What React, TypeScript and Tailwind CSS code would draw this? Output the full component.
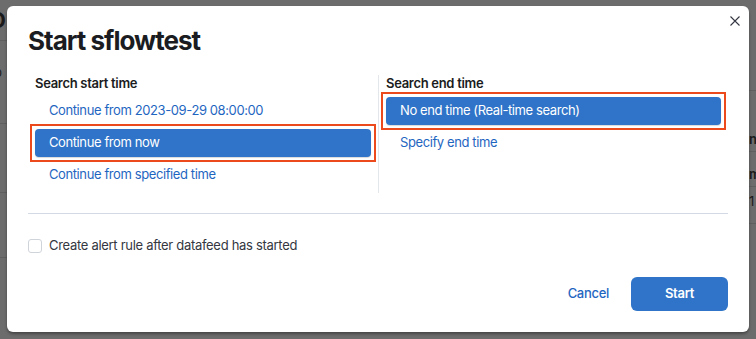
import { useState } from 'react'

const startOptions = ['Continue from 2023-09-29 08:00:00', 'Continue from now', 'Continue from specified time']
const endOptions = ['No end time (Real-time search)', 'Specify end time']

function OptionList({
  title,
  options,
  selected,
  onSelect,
  className,
}: {
  title: string
  options: string[]
  selected: number
  onSelect: (i: number) => void
  className?: string
}) {
  return (
    <div className={`px-[7px] pb-[4px] ${className ?? ''}`}>
      <h3 className="h-4 text-[13px] leading-4 font-semibold tracking-[-0.3px] text-[#1a1c21]">{title}</h3>
      <div className="mt-[6px] flex flex-col gap-1">
        {options.map((opt, i) => (
          <button
            key={opt}
            onClick={() => onSelect(i)}
            className={`relative h-7 w-full rounded-[4px] px-[14px] text-left text-[13px] tracking-[-0.4px] ${
              selected === i
                ? 'bg-[#2f74c8] text-white shadow-[0_1px_1px_rgba(0,0,0,0.15)]'
                : 'text-[#1f66c1]'
            }`}
          >
            {opt}
            {/* highlight box drawn over the selected choice */}
            {selected === i && (
              <span className="pointer-events-none absolute -inset-[5px] border-2 border-[#ec4a1c]" />
            )}
          </button>
        ))}
      </div>
    </div>
  )
}

export default function App() {
  const [start, setStart] = useState(1)
  const [end, setEnd] = useState(0)
  const [alertRule, setAlertRule] = useState(false)

  return (
    <div className="relative h-[339px] w-[756px] overflow-hidden bg-[#6c6c6c] font-['Inter',sans-serif]">
      {/* dimmed page behind the modal */}
      <div className="flex h-full justify-between">
        <div className="flex w-[7px] flex-col text-[#1a1a1a]">
          <span className="-ml-[10px] text-[22px] font-bold leading-[40px]">D</span>
          <div className="h-px bg-[#5f5f5f]" />
          <span className="-ml-[6px] mt-[22px] text-[13px] text-[#202020]">p</span>
          <div className="mt-[40px] h-px bg-[#5f5f5f]" />
          <div className="mt-[68px] h-px bg-[#5f5f5f]" />
          <div className="mt-[64px] h-px bg-[#5f5f5f]" />
        </div>
        <div className="flex w-[7px] flex-col text-[13px] font-semibold text-[#1a1a1a]">
          <div className="mt-[90px] h-px bg-[#5f5f5f]" />
          <span className="mt-[40px] leading-4">ni</span>
          <div className="mt-[4px] h-px bg-[#5f5f5f]" />
          <span className="mt-[14px] leading-4">m</span>
          <div className="mt-[4px] h-px bg-[#5f5f5f]" />
          <span className="mt-[6px] font-normal leading-4">1</span>
          <div className="mt-[14px] h-px bg-[#5f5f5f]" />
        </div>
      </div>

      {/* modal */}
      <div className="absolute left-[7px] top-[6px] flex h-[326px] w-[742px] flex-col rounded-[6px] bg-white px-[21px] pt-[19px] shadow-[0_2px_3px_rgba(0,0,0,0.35)]">
        <button className="absolute right-[4px] top-[5px] flex h-5 w-5 items-center justify-center text-[#343741]">
          <svg width="10" height="10" viewBox="0 0 10 10" fill="none" stroke="currentColor" strokeWidth="1.1">
            <path d="M0.5 0.5l9 9M9.5 0.5l-9 9" />
          </svg>
        </button>

        <h2 className="text-[26px] font-bold leading-8 tracking-[-1px] text-[#1a1c21]">Start sflowtest</h2>

        <div className="mt-[18px] grid grid-cols-2">
          <OptionList title="Search start time" options={startOptions} selected={start} onSelect={setStart} />
          <OptionList
            title="Search end time"
            options={endOptions}
            selected={end}
            onSelect={setEnd}
            className="border-l border-[#e3e6eb]"
          />
        </div>

        <div className="mt-[20px] h-px bg-[#d3dae6]" />

        <label className="mt-[22px] flex items-center gap-[7px] text-[13px] tracking-[-0.3px] text-[#343741]">
          <input
            type="checkbox"
            checked={alertRule}
            onChange={(e) => setAlertRule(e.target.checked)}
            className="h-[14px] w-[14px] appearance-none rounded-[3px] border border-[#cfd4db] bg-white"
          />
          Create alert rule after datafeed has started
        </label>

        <div className="mt-auto mb-[21px] flex items-center justify-end gap-[22px]">
          <button className="text-[13px] font-medium tracking-[-0.3px] text-[#1f66c1]">Cancel</button>
          <button className="h-[34px] w-[97px] rounded-[6px] bg-[#2f74c8] text-[13px] font-semibold tracking-[-0.3px] text-white">
            Start
          </button>
        </div>
      </div>
    </div>
  )
}
